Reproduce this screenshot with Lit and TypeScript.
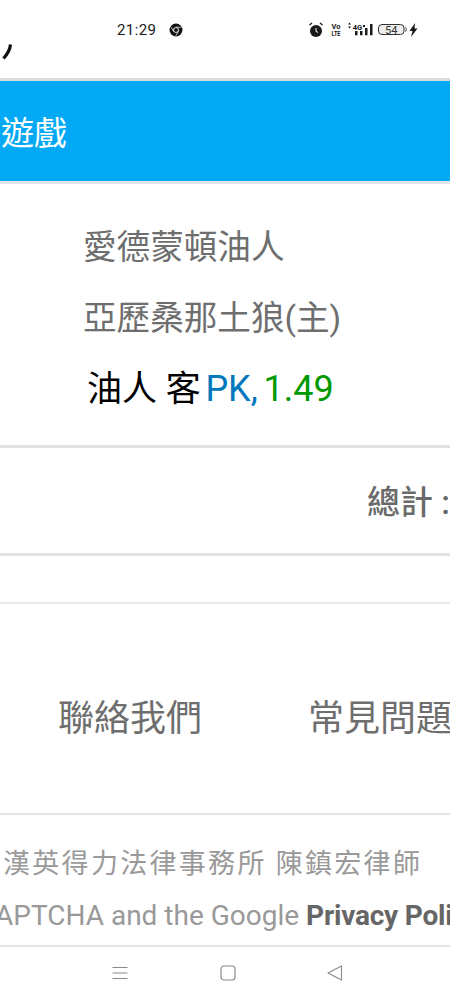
import { LitElement, html, css } from 'lit';
import { customElement } from 'lit/decorators.js';

@customElement('app-root')
export class AppRoot extends LitElement {
  static styles = css`
    :host {
      display: block;
      width: 450px;
      height: 1000px;
      overflow: hidden;
      background: #fff;
      font-family: Roboto, "Noto Sans CJK TC", sans-serif;
    }
    .status {
      box-sizing: border-box;
      border-bottom: 3px solid #dcdcdc;
      height: 81px;
      display: flex;
      flex-direction: column;
    }
    .status-row {
      display: flex;
      align-items: center;
      height: 20px;
      margin-top: 20px;
      padding-left: 117px;
      color: #1a1a1a;
    }
    .time { font-size: 15px; letter-spacing: 0.4px; width: 52px; }
    .chrome { width: 14px; height: 14px; }
    .icons { display: flex; align-items: center; margin-left: 126px; }
    .stub { margin: 3px 0 0 2px; width: 12px; height: 18px; }
    .title {
      height: 100px;
      background: #03a9f4;
      color: #fff;
      font-size: 33px;
      display: flex;
      align-items: center;
      padding-left: 1px;
      border-bottom: 3px solid #dfe3ea;
    }
    .teams {
      padding: 28px 0 20px;
      border-bottom: 3px solid #e2e2e2;
    }
    .team {
      height: 71px;
      line-height: 71px;
      padding-left: 83px;
      font-size: 33.6px;
      color: #6e6e6e;
      white-space: nowrap;
    }
    .bet { padding-left: 87px; color: #000; font-size: 35px; white-space: nowrap; }
    .pk { color: #0277bd; font-size: 36px; margin-left: -4px; }
    .odds { color: #009900; font-size: 36px; margin-left: -3px; }
    .total {
      padding-bottom: 2px;
      box-sizing: border-box;
      border-bottom: 3px solid #e2e2e2;
      height: 108px;
      display: flex;
      align-items: center;
      justify-content: flex-end;
      color: #6a6a6a;
      font-size: 33px;
      font-weight: 500;
      white-space: nowrap;
    }
    .spacer { height: 46px; border-bottom: 2px solid #e8e8e8; }
    .links {
      box-sizing: border-box;
      height: 211px;
      border-bottom: 2px solid #e4e4e4;
      display: flex;
      gap: 106px;
      align-items: center;
      padding: 12px 0 0 58px;
      font-size: 36px;
      color: #6e6e6e;
      white-space: nowrap;
      overflow: hidden;
    }
    .footer {
      height: 130px;
      border-bottom: 2px solid #e4e4e4;
      color: #999;
      overflow: hidden;
      white-space: nowrap;
    }
    .firm {
      font-size: 27px;
      letter-spacing: 2.3px;
      padding: 29px 0 0 3px;
      line-height: 40px;
    }
    .captcha {
      font-size: 28px;
      line-height: 40px;
      margin: 12px 0 0 -5px;
    }
    .captcha strong { color: #666; font-weight: 700; letter-spacing: -0.2px; }
    .nav {
      display: flex;
      align-items: center;
      justify-content: center;
      gap: 89.5px;
      height: 52px;
      padding-left: 5px;
    }
    .nav svg { width: 18px; height: 18px; display: block; }
  `;

  render() {
    return html`
      <div class="status">
        <div class="status-row">
          <span class="time">21:29</span>
          <svg class="chrome" viewBox="0 0 14 14">
            <circle cx="7" cy="7" r="6.500" fill="#111"></circle>
            <circle cx="7" cy="7" r="2.800" fill="#fff"></circle>
            <circle cx="7" cy="7" r="2" fill="#111"></circle>
            <path d="M7 4.200h5.400M4.600 8.400 1.900 3.800M9.400 8.400 6.700 13" stroke="#fff" stroke-width="0.700"></path>
          </svg>
          <div class="icons">
            <svg width="112" height="20" viewBox="0 0 112 20">
              <circle cx="7" cy="11" r="6" fill="#1a1a1a"></circle>
              <path d="M7 8v3.400l2 1" stroke="#fff" stroke-width="1" fill="none"></path>
              <path d="M0.500 5 3 3M13.500 5 11 3" stroke="#1a1a1a" stroke-width="1.500"></path>
              <text x="22.500" y="8.800" font-size="7.500" font-weight="700" fill="#1a1a1a" font-family="Roboto">Vo</text>
              <text x="22.500" y="15.700" font-size="7" font-weight="700" fill="#1a1a1a" font-family="Roboto" textLength="9" lengthAdjust="spacingAndGlyphs">LTE</text>
              <text x="43.700" y="9.500" font-size="7.500" font-weight="700" fill="#1a1a1a" font-family="Roboto">4G</text>
              <path d="M39 4.500l1.500-2 1.500 2zM39 6.500l1.500 2 1.500-2zM54 5h2v2h-2z" fill="#1a1a1a"></path>
              <path d="M46 11h2.500v4.300H46zM51 11h2.500v4.300H51zM56 8h2.500v7.300H56zM61 4h2.500v11.300H61z" fill="#1a1a1a"></path>
              <rect x="69.500" y="4.500" width="25.500" height="10" rx="3.500" fill="#eee" stroke="#333" stroke-width="1"></rect>
              <text x="76" y="13.500" font-size="11" fill="#333" font-family="Roboto">54</text>
              <path d="M96.500 7.500a3 3 0 0 1 0 4" stroke="#333" fill="none"></path>
              <path d="M106 3 100.500 11h3L102 17l6.500-8.500h-3z" fill="#1a1a1a"></path>
            </svg>
          </div>
        </div>
        <svg class="stub" viewBox="0 0 12 18">
          <path d="M8.500 1.500C8 6 6.500 10 1.500 15.500" stroke="#111" stroke-width="3.200" fill="none"></path>
        </svg>
      </div>
      <div class="title">遊戲</div>
      <div class="teams">
        <div class="team">愛德蒙頓油人</div>
        <div class="team">亞歷桑那土狼(主)</div>
        <div class="team bet">油人 客 <span class="pk">PK,</span> <span class="odds">1.49</span></div>
      </div>
      <div class="total"><span>總計 :</span></div>
      <div class="spacer"></div>
      <div class="links"><span>聯絡我們</span><span>常見問題</span></div>
      <div class="footer">
        <div class="firm">漢英得力法律事務所 陳鎮宏律師</div>
        <div class="captcha">APTCHA and the Google <strong>Privacy Policy</strong></div>
      </div>
      <div class="nav">
        <svg viewBox="0 0 18 18"><path d="M1.500 3.500h15M1.500 9h15M1.500 14.500h15" stroke="#8a8a8a" stroke-width="1.100" fill="none"></path></svg>
        <svg viewBox="0 0 18 18"><rect x="2" y="2" width="14" height="14" rx="3" stroke="#8a8a8a" stroke-width="1.200" fill="none"></rect></svg>
        <svg viewBox="0 0 18 18"><path d="M15.500 2v14L2 9z" stroke="#8a8a8a" stroke-width="1.100" stroke-linejoin="round" fill="none"></path></svg>
      </div>
    `;
  }
}
